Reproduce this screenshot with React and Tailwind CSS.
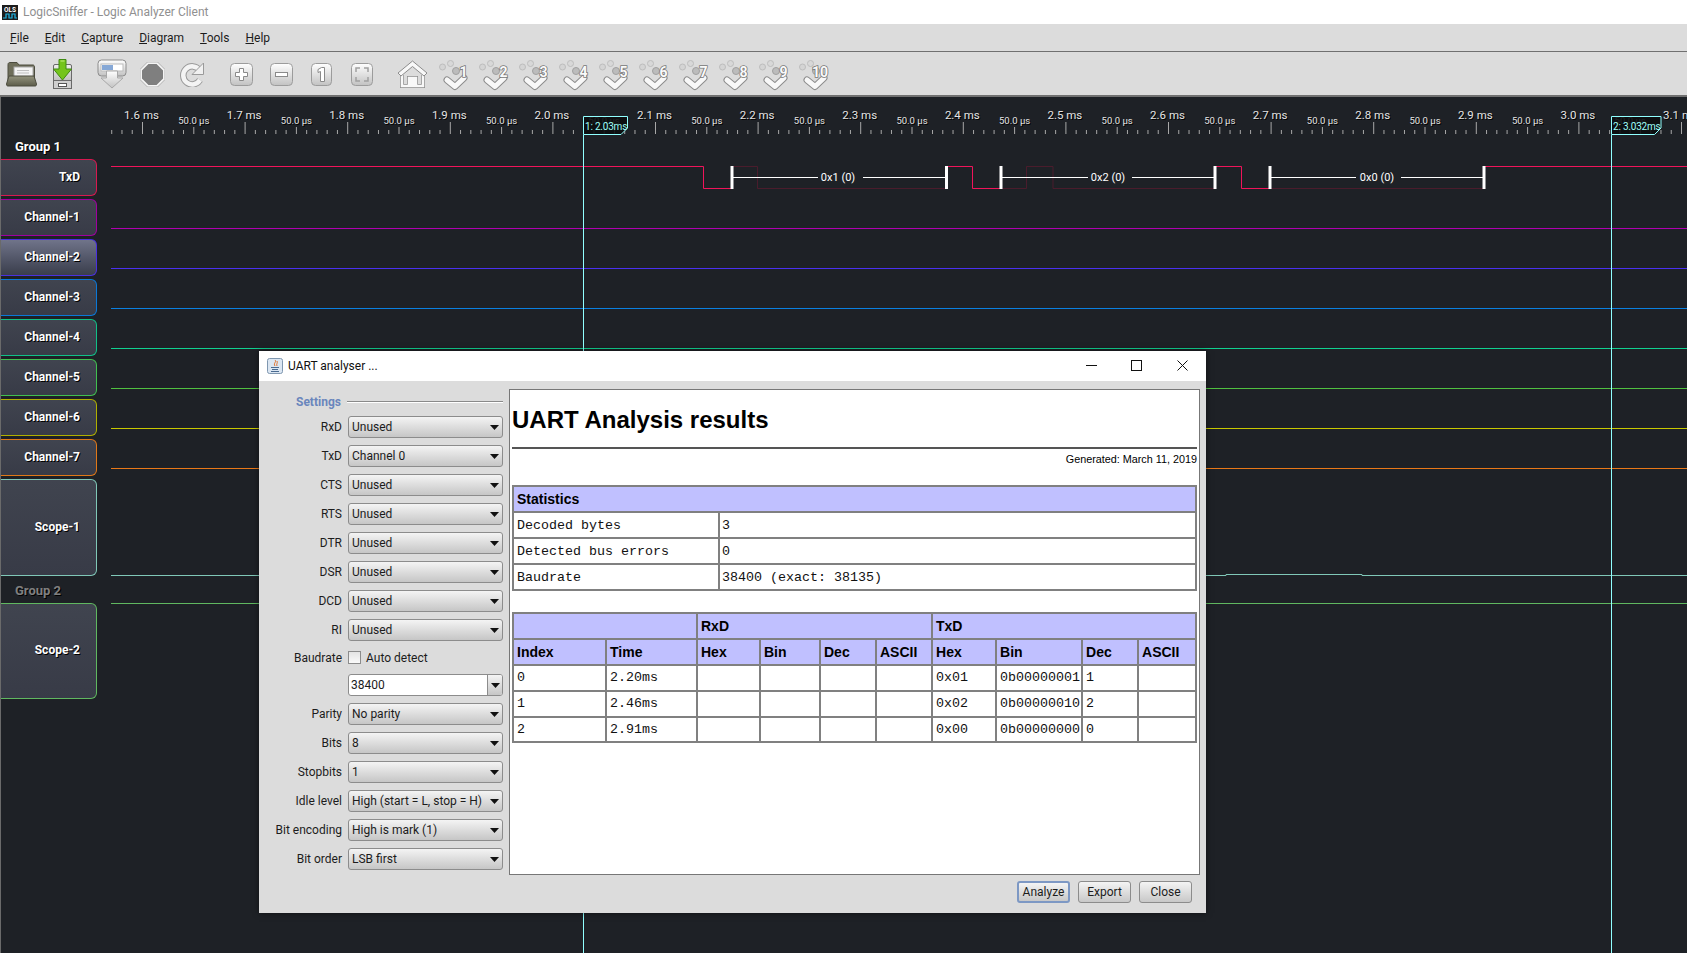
import React from "react";

const channels = [
  { name: "TxD", border: "border-[#d81850]" },
  { name: "Channel-1", border: "border-[#a000a0]" },
  { name: "Channel-2", border: "border-[#4a30e0]", active: true },
  { name: "Channel-3", border: "border-[#0a78d8]" },
  { name: "Channel-4", border: "border-[#10c088]" },
  { name: "Channel-5", border: "border-[#40c050]" },
  { name: "Channel-6", border: "border-[#b0b000]" },
  { name: "Channel-7", border: "border-[#e07818]" },
];

const lines = [
  { y: 228.5, color: "#b000b0" },
  { y: 268.5, color: "#4a30f0" },
  { y: 308.5, color: "#0a80e0" },
  { y: 348.5, color: "#10d090" },
  { y: 388.5, color: "#50c040" },
  { y: 428.5, color: "#c8c800" },
  { y: 468.5, color: "#e87818" },
  { y: 603.5, color: "#60b860" },
];

const pitch = 102.6;
const origin = 142.5;

function Timeline() {
  const ticks = [];
  for (let i = -3; i < 154; i++) {
    const x = origin + (i * pitch) / 10;
    const mod = ((i % 10) + 10) % 10;
    const top = mod === 0 ? 122 : mod === 5 ? 127 : 130;
    ticks.push(<line key={i} x1={x} x2={x} y1={top} y2={134} stroke="#a8a8a8" />);
  }
  const majors = [];
  for (let i = 0; i < 16; i++) {
    const x = origin + i * pitch;
    const label = (1.6 + i / 10).toFixed(1) + " ms";
    majors.push(
      <text key={label} x={x - 1} y={119} textAnchor="middle" fontSize="11.500" fill="#e4e4e4" className="[text-shadow:1px_1px_0_#000]">
        {label}
      </text>
    );
    if (i < 15) {
      majors.push(
        <text key={"m" + i} x={x + pitch / 2} y={124} textAnchor="middle" fontSize="9.500" fill="#e4e4e4" className="[text-shadow:1px_1px_0_#000]">
          50.0 µs
        </text>
      );
    }
  }
  const bars = [731.5, 946, 1000.5, 1214.5, 1269.5, 1483.5];
  return (
    <svg className="block h-[856px] flex-1" viewBox="111 97 1576 856">
      {ticks}
      {majors}
      {lines.map((l) => (
        <line key={l.y} x1="111" x2="1687" y1={l.y} y2={l.y} stroke={l.color} />
      ))}
      <path d="M111 575.5H1226V574.5H1362V575.5H1687" fill="none" stroke="#80c8b8" />
      <path d="M733 166.5H757.5V188.5H945M1000 188.5H1026.5V166.5H1053V188.5H1214M1269 188.5H1483" fill="none" stroke="#4a1c2c" />
      <path d="M111 166.5H703.5V188.5H731M947 166.5H972.5V188.5H1000M1215 166.5H1241.5V188.5H1269M1485 166.5H1687" fill="none" stroke="#f0145a" />
      <path d="M733 177.5H818M863 177.5H945M1002 177.5H1088M1132 177.5H1214M1271 177.5H1356M1401 177.5H1483" stroke="#fff" />
      {bars.map((x) => (
        <rect key={x} x={x - 1} y="166" width="3" height="23" fill="#fff" />
      ))}
      <text x="838" y="181" textAnchor="middle" fontSize="11" fill="#fff">0x1 (0)</text>
      <text x="1108" y="181" textAnchor="middle" fontSize="11" fill="#fff">0x2 (0)</text>
      <text x="1377" y="181" textAnchor="middle" fontSize="11" fill="#fff">0x0 (0)</text>
      <path d="M583.5 134.5V953M1611.5 134.5V953" stroke="#90ffff" />
      <path d="M583.5 116.5H627.5V128L621 134.5H583.5Z" fill="#0b0d10" fillOpacity="0.9" stroke="#90ffff" />
      <path d="M1611.5 116.5H1661V128L1654.5 134.5H1611.5Z" fill="#0b0d10" fillOpacity="0.9" stroke="#90ffff" />
      <text x="585" y="130" fontSize="10" letterSpacing="-0.2" fill="#9ffff8">1: 2.03ms</text>
      <text x="1613" y="130" fontSize="10" letterSpacing="-0.2" fill="#9ffff8">2: 3.032ms</text>
    </svg>
  );
}

function SharedDefs() {
  return (
    <svg className="block h-0 w-0">
      <defs>
        <linearGradient id="gloss" x1="0" y1="0" x2="0" y2="1">
          <stop offset="0" stopColor="#ffffff" />
          <stop offset="1" stopColor="#c2c2c2" />
        </linearGradient>
        <linearGradient id="olive" x1="0" y1="0" x2="0" y2="1">
          <stop offset="0" stopColor="#94947e" />
          <stop offset="1" stopColor="#5c5c4a" />
        </linearGradient>
        <linearGradient id="panel" x1="0" y1="0" x2="0" y2="1">
          <stop offset="0" stopColor="#f0f0f0" />
          <stop offset="1" stopColor="#a8a8a8" />
        </linearGradient>
      </defs>
    </svg>
  );
}

const FolderIcon = () => (
  <svg width="31" height="26" viewBox="0 0 31 26">
    <path d="M2 3.500C2 2 3 1.500 4 1.500H11L13 4H27C28 4 28.500 5 28.500 6V20H2Z" fill="#6e6e5a" stroke="#4c4c3e" />
    <rect x="8" y="6" width="19" height="12" fill="#f4f4f4" stroke="#a8a8a8" />
    <path d="M11 9.500H23M11 12H23" stroke="#c0c0c0" />
    <path d="M3 15H28L30.500 23C30.500 24.500 30 25 29 25H2C1 25 .5 24.500 .5 23Z" fill="url(#olive)" stroke="#4c4c3e" />
  </svg>
);

const SaveIcon = () => (
  <svg width="21" height="31" viewBox="0 0 21 31">
    <rect x="1.500" y="5.500" width="18" height="24" rx="1.500" fill="url(#panel)" stroke="#6a6a6a" />
    <rect x="1.500" y="21.500" width="18" height="8" fill="#cfcfcf" stroke="#6a6a6a" />
    <rect x="6.500" y="24.500" width="8" height="3" fill="#fff" stroke="#555" />
    <path d="M7 .5H14V10H19.500L10.500 21L1.500 10H7Z" fill="#74c41c" stroke="#3f8a10" />
    <path d="M8.500 2H12.500" stroke="#c4ee80" />
  </svg>
);

const CaptureIcon = () => (
  <svg width="30" height="30" viewBox="0 0 30 30">
    <rect x="1" y="1" width="28" height="16" rx="3.500" fill="url(#gloss)" stroke="#8c8c8c" />
    <rect x="4" y="5" width="22" height="7" fill="#fff" stroke="#bbb" />
    <rect x="5" y="6" width="11" height="5" fill="#86a8d6" />
    <path d="M9.500 12H20.500V19H26L15 29L4 19H9.500Z" fill="url(#gloss)" stroke="#a8a8a8" />
  </svg>
);

const StopIcon = () => (
  <svg width="25" height="25" viewBox="0 0 25 25">
    <path d="M8 1H17L24 8V17L17 24H8L1 17V8Z" fill="#7f7f7f" stroke="#f4f4f4" strokeWidth="2" />
    <path d="M7.500 0H17.500L25 7.500V17.500L17.500 25H7.500L0 17.500V7.500Z" fill="none" stroke="#a4a4a4" strokeWidth=".8" />
  </svg>
);

const RefreshIcon = () => (
  <svg width="24" height="25" viewBox="0 0 24 25">
    <path d="M19.500 8A9 9 0 1 0 20 18" fill="none" stroke="#9a9a9a" strokeWidth="6.500" />
    <path d="M19.500 8A9 9 0 1 0 20 18" fill="none" stroke="#f4f4f4" strokeWidth="4.500" />
    <path d="M23.500 1V12.500H12Z" fill="#f0f0f0" stroke="#9a9a9a" />
  </svg>
);

const KeyIcon = ({ children, width = 23 }) => (
  <svg width={width} height="23" viewBox={`0 0 ${width} 23`}>
    <rect x=".5" y=".5" width={width - 1} height="22" rx="4" fill="url(#gloss)" stroke="#9c9c9c" />
    {children}
  </svg>
);

const HomeIcon = () => (
  <svg width="31" height="28" viewBox="0 0 31 28">
    <path d="M5 15V26H12V18H14.500V26H16.500V18H19V26H26V15" fill="none" stroke="#8c8c8c" strokeWidth="4" />
    <path d="M5 15V26H12V18H14.500V26H16.500V18H19V26H26V15" fill="none" stroke="#f8f8f8" strokeWidth="2.500" />
    <path d="M1 13L15.500 1L30 13L27 16L15.500 6.500L4 16Z" fill="#f8f8f8" stroke="#8c8c8c" />
  </svg>
);

const CursorIcon = ({ n }) => (
  <svg width="29" height="29" viewBox="0 0 29 29" className="overflow-visible">
    <circle cx="3.500" cy="7" r="3" fill="#d4d4d4" stroke="#bdbdbd" />
    <circle cx="11.500" cy="3.500" r="3" fill="#d8d8d8" stroke="#bdbdbd" />
    <circle cx="17" cy="11" r="3.500" fill="#bcbcbc" stroke="#a0a0a0" />
    <path d="M8 20L16 26.500L25 18" fill="none" stroke="#8c8c8c" strokeWidth="7" strokeLinejoin="round" strokeLinecap="round" />
    <path d="M8 20L16 26.500L25 18" fill="none" stroke="#f8f8f8" strokeWidth="5" strokeLinejoin="round" strokeLinecap="round" />
    <text x={n === 10 ? 21 : 24.500} y="17" textAnchor="middle" fontSize="14" fontWeight="700" fill="#fafafa" stroke="#777" strokeWidth="1.600" paintOrder="stroke">
      {n}
    </text>
  </svg>
);

function Toolbar() {
  return (
    <div className="flex h-[42px] items-center pl-[6px]">
      <FolderIcon />
      <div className="ml-[15px]"><SaveIcon /></div>
      <div className="ml-[24px]"><CaptureIcon /></div>
      <div className="ml-[13px]"><StopIcon /></div>
      <div className="ml-[15px]"><RefreshIcon /></div>
      <div className="ml-[26px]">
        <KeyIcon>
          <path d="M9.500 5.500H13.500V9.500H17.500V13.500H13.500V17.500H9.500V13.500H5.500V9.500H9.500Z" fill="#fff" stroke="#8a8a8a" />
        </KeyIcon>
      </div>
      <div className="ml-[17px]">
        <KeyIcon>
          <rect x="5.500" y="9.500" width="12" height="4" fill="#fff" stroke="#8a8a8a" />
        </KeyIcon>
      </div>
      <div className="ml-[18px]">
        <KeyIcon width={21}>
          <path d="M7 6.500L10.500 4.500H13.500V18.500H9.500V8.500L7 9.500Z" fill="#fff" stroke="#8a8a8a" />
        </KeyIcon>
      </div>
      <div className="ml-[19px]">
        <KeyIcon width={22}>
          <path d="M5 9V5H9M13 5H17V9M17 14V18H13M9 18H5V14" fill="none" stroke="#a0a0a0" strokeWidth="1.500" />
        </KeyIcon>
      </div>
      <div className="ml-[24px]"><HomeIcon /></div>
      <div className="ml-[11px] flex gap-[11px]">
        {[1, 2, 3, 4, 5, 6, 7, 8, 9, 10].map((n) => (
          <CursorIcon key={n} n={n} />
        ))}
      </div>
    </div>
  );
}

const menu = [
  ["F", "ile"],
  ["E", "dit"],
  ["C", "apture"],
  ["D", "iagram"],
  ["T", "ools"],
  ["H", "elp"],
];

const Caret = () => (
  <svg width="9" height="5" viewBox="0 0 9 5" className="shrink-0">
    <path d="M0 0H9L4.500 5Z" fill="#111" />
  </svg>
);

function Combo({ value }) {
  return (
    <div className="flex h-[22px] w-[155px] items-center justify-between rounded-[3px] border border-[#8c8c8c] bg-gradient-to-b from-[#f4f4f4] to-[#c6c6c6] pr-[3px] pl-[3px] text-[12px] text-[#1c1c1c]">
      <span>{value}</span>
      <Caret />
    </div>
  );
}

function Row({ label, children }) {
  return (
    <div className="flex items-center gap-[6px]">
      <div className="w-[83px] text-right text-[12px] text-[#1c1c1c]">{label}</div>
      {children}
    </div>
  );
}

const topRows = [
  ["RxD", "Unused"],
  ["TxD", "Channel 0"],
  ["CTS", "Unused"],
  ["RTS", "Unused"],
  ["DTR", "Unused"],
  ["DSR", "Unused"],
  ["DCD", "Unused"],
  ["RI", "Unused"],
];

const bottomRows = [
  ["Parity", "No parity"],
  ["Bits", "8"],
  ["Stopbits", "1"],
  ["Idle level", "High (start = L, stop = H)"],
  ["Bit encoding", "High is mark (1)"],
  ["Bit order", "LSB first"],
];

function Settings() {
  return (
    <div className="flex w-[250px] shrink-0 flex-col gap-[7px] pt-[6px] pr-[6px]">
      <div className="flex h-[14px] items-center gap-[6px] pl-[37px]">
        <span className="text-[12px] font-bold text-[#6a86bc]">Settings</span>
        <span className="h-[2px] flex-1 border-t border-[#8a8a8a] bg-white" />
      </div>
      {topRows.map(([label, value]) => (
        <Row key={label} label={label}>
          <Combo value={value} />
        </Row>
      ))}
      <Row label="Baudrate">
        <div className="flex h-[19px] items-center gap-[5px] text-[12px] text-[#1c1c1c]">
          <span className="h-[13px] w-[13px] border border-[#8c8c8c] bg-gradient-to-b from-[#e4e4e4] to-[#fafafa]" />
          Auto detect
        </div>
      </Row>
      <Row label="">
        <div className="flex h-[22px] w-[155px] overflow-hidden rounded-[3px] border border-[#8c8c8c] bg-white text-[12px] text-[#1c1c1c]">
          <span className="flex flex-1 items-center pl-[2px]">38400</span>
          <span className="flex w-[15px] items-center justify-center border-l border-[#8c8c8c] bg-gradient-to-b from-[#f4f4f4] to-[#c6c6c6]">
            <Caret />
          </span>
        </div>
      </Row>
      {bottomRows.map(([label, value]) => (
        <Row key={label} label={label}>
          <Combo value={value} />
        </Row>
      ))}
    </div>
  );
}

const headCell = "border border-[#808080] bg-[#c0c0ff] px-[3px] text-left align-middle font-['Liberation_Sans',sans-serif] text-[14px] font-bold text-black";
const bodyCell = "border border-[#808080] px-[3px] align-middle font-['Liberation_Mono',monospace] text-[13.33px] text-[#111]";
const statCell = "border border-[#808080] px-[3px] pt-[2px] align-middle font-['Liberation_Mono',monospace] text-[13.33px] text-[#111]";

const decoded = [
  ["0", "2.20ms", "0x01", "0b00000001", "1"],
  ["1", "2.46ms", "0x02", "0b00000010", "2"],
  ["2", "2.91ms", "0x00", "0b00000000", "0"],
];

const stats = [
  ["Decoded bytes", "3"],
  ["Detected bus errors", "0"],
  ["Baudrate", "38400 (exact: 38135)"],
];

function Results() {
  return (
    <div className="h-[486px] w-[691px] border border-[#777] bg-white px-[2px] font-['Liberation_Sans',sans-serif]">
      <h1 className="pt-[16px] text-[24px] leading-[28px] font-bold text-black">UART Analysis results</h1>
      <div className="mt-[13px] h-[2px] bg-[#555]" />
      <div className="mt-[4px] text-right text-[10.8px] leading-[13px] text-black">Generated: March 11, 2019</div>
      <table className="mt-[19px] w-[685px] table-fixed border-separate border-spacing-0 border border-[#808080]">
        <colgroup>
          <col className="w-[206px]" />
          <col />
        </colgroup>
        <tbody>
          <tr className="h-[26px]">
            <th colSpan={2} className={headCell}>Statistics</th>
          </tr>
          {stats.map(([name, value]) => (
            <tr key={name} className="h-[26px]">
              <td className={statCell}>{name}</td>
              <td className={statCell + " pl-[2px]"}>{value}</td>
            </tr>
          ))}
        </tbody>
      </table>
      <table className="mt-[21px] w-[685px] table-fixed border-separate border-spacing-0 border border-[#808080]">
        <colgroup>
          <col className="w-[93px]" />
          <col className="w-[91px]" />
          <col className="w-[63px]" />
          <col className="w-[60px]" />
          <col className="w-[56px]" />
          <col className="w-[56px]" />
          <col className="w-[64px]" />
          <col className="w-[86px]" />
          <col className="w-[56px]" />
          <col />
        </colgroup>
        <tbody>
          <tr className="h-[26px]">
            <th colSpan={2} className={headCell}></th>
            <th colSpan={4} className={headCell}>RxD</th>
            <th colSpan={4} className={headCell}>TxD</th>
          </tr>
          <tr className="h-[26px]">
            {["Index", "Time", "Hex", "Bin", "Dec", "ASCII", "Hex", "Bin", "Dec", "ASCII"].map((h, i) => (
              <th key={i} className={headCell}>{h}</th>
            ))}
          </tr>
          {decoded.map((r) => (
            <tr key={r[0]} className={r[0] === "2" ? "h-[25px]" : "h-[26px]"}>
              <td className={bodyCell}>{r[0]}</td>
              <td className={bodyCell}>{r[1]}</td>
              <td className={bodyCell}></td>
              <td className={bodyCell}></td>
              <td className={bodyCell}></td>
              <td className={bodyCell}></td>
              <td className={bodyCell}>{r[2]}</td>
              <td className={bodyCell + " whitespace-nowrap"}>{r[3]}</td>
              <td className={bodyCell}>{r[4]}</td>
              <td className={bodyCell}></td>
            </tr>
          ))}
        </tbody>
      </table>
    </div>
  );
}

function DialogButton({ label, focused }) {
  return (
    <button
      className={
        "h-[22px] w-[53px] rounded-[3px] bg-gradient-to-b from-[#f4f4f4] to-[#c8c8c8] text-[12px] text-[#1c1c1c] " +
        (focused ? "border-2 border-[#7d98c4]" : "border border-[#8c8c8c]")
      }
    >
      {label}
    </button>
  );
}

function Dialog() {
  return (
    <div className="absolute top-[351px] left-[259px] flex h-[562px] w-[947px] flex-col bg-[#dcdcdc] shadow-[0_0_6px_rgba(0,0,0,0.5)]">
      <div className="flex h-[30px] shrink-0 items-center bg-white pl-[8px] text-[12px] text-[#111]">
        <svg width="16" height="16" viewBox="0 0 16 16">
          <rect x=".5" y=".5" width="15" height="15" rx="2" fill="#dbe6f2" stroke="#7f97b0" />
          <path d="M8 2C10 4 6 5 8 8M10 3C11 5 9 6 10 8" fill="none" stroke="#e0702a" />
          <path d="M4 9.500H12M5 11.500H11M4 13.500H12" stroke="#4a6a90" />
        </svg>
        <span className="ml-[5px]">UART analyser ...</span>
        <div className="ml-auto flex items-center">
          <svg width="160" height="30" viewBox="0 0 160 30">
            <path d="M40 14.500H51" stroke="#111" />
            <rect x="85.500" y="9.500" width="10" height="10" fill="none" stroke="#111" />
            <path d="M131.500 9.500L141.500 19.500M141.500 9.500L131.500 19.500" stroke="#111" />
          </svg>
        </div>
      </div>
      <div className="flex flex-1 pt-[8px]">
        <Settings />
        <Results />
      </div>
      <div className="flex h-[38px] shrink-0 justify-end gap-[8px] pt-[6px] pr-[14px]">
        <DialogButton label="Analyze" focused />
        <DialogButton label="Export" />
        <DialogButton label="Close" />
      </div>
    </div>
  );
}

function ChannelLabel({ name, border, active, height }) {
  return (
    <div
      className={
        "mr-[14px] mb-[3px] flex items-center justify-end rounded-r-[6px] border border-l-0 pr-[16px] pb-[2px] text-[12px] font-bold text-white [text-shadow:1px_1px_0_#000] " +
        height + " " + border + " " +
        (active ? "bg-gradient-to-b from-[#70748a] to-[#3a3e4c]" : "bg-gradient-to-b from-[#40444f] to-[#383b47]")
      }
    >
      {name}
    </div>
  );
}

export default function App() {
  return (
    <div className="flex h-[953px] w-[1687px] flex-col overflow-hidden bg-[#dcdcdc] font-['Roboto',sans-serif]">
      <SharedDefs />
      <div className="flex h-[24px] items-center bg-white pl-[2px] text-[12px] text-[#909090]">
        <svg width="16" height="15" viewBox="0 0 16 15">
          <rect width="16" height="15" fill="#1c1c1c" />
          <text x="8" y="7" textAnchor="middle" fontSize="6.500" fontWeight="700" fill="#fff">OLS</text>
          <path d="M1 13H4V9H7V13H10V9H13V13H15" fill="none" stroke="#20b8e8" strokeWidth="1.200" />
        </svg>
        <span className="ml-[5px]">LogicSniffer - Logic Analyzer Client</span>
      </div>
      <div className="flex h-[28px] items-center gap-[16px] border-b border-[#707070] pl-[10px] text-[12px] text-[#1c1c1c]">
        {menu.map(([first, rest]) => (
          <span key={first}>
            <span className="underline">{first}</span>
            {rest}
          </span>
        ))}
      </div>
      <div className="mt-px h-[44px] border-b-2 border-[#707070]">
        <Toolbar />
      </div>
      <div className="relative flex h-[856px] bg-[#1e2126]">
        <div className="w-[111px] shrink-0 border-l border-[#6a6a6a]">
          <div className="pt-[40px] pb-[2px] pl-[14px] text-[13px] leading-[20px] font-bold text-white [text-shadow:1px_1px_0_#000]">Group 1</div>
          {channels.map((c) => (
            <ChannelLabel key={c.name} name={c.name} border={c.border} active={c.active} height="h-[37px]" />
          ))}
          <ChannelLabel name="Scope-1" border="border-[#80c8b8]" height="h-[97px]" />
          <div className="-mt-[3px] h-[27px] pt-px pl-[14px] text-[13px] leading-[27px] font-bold text-[#808080] [text-shadow:1px_1px_0_#000]">Group 2</div>
          <ChannelLabel name="Scope-2" border="border-[#60b860]" height="h-[96px]" />
        </div>
        <Timeline />
      </div>
      <Dialog />
    </div>
  );
}
